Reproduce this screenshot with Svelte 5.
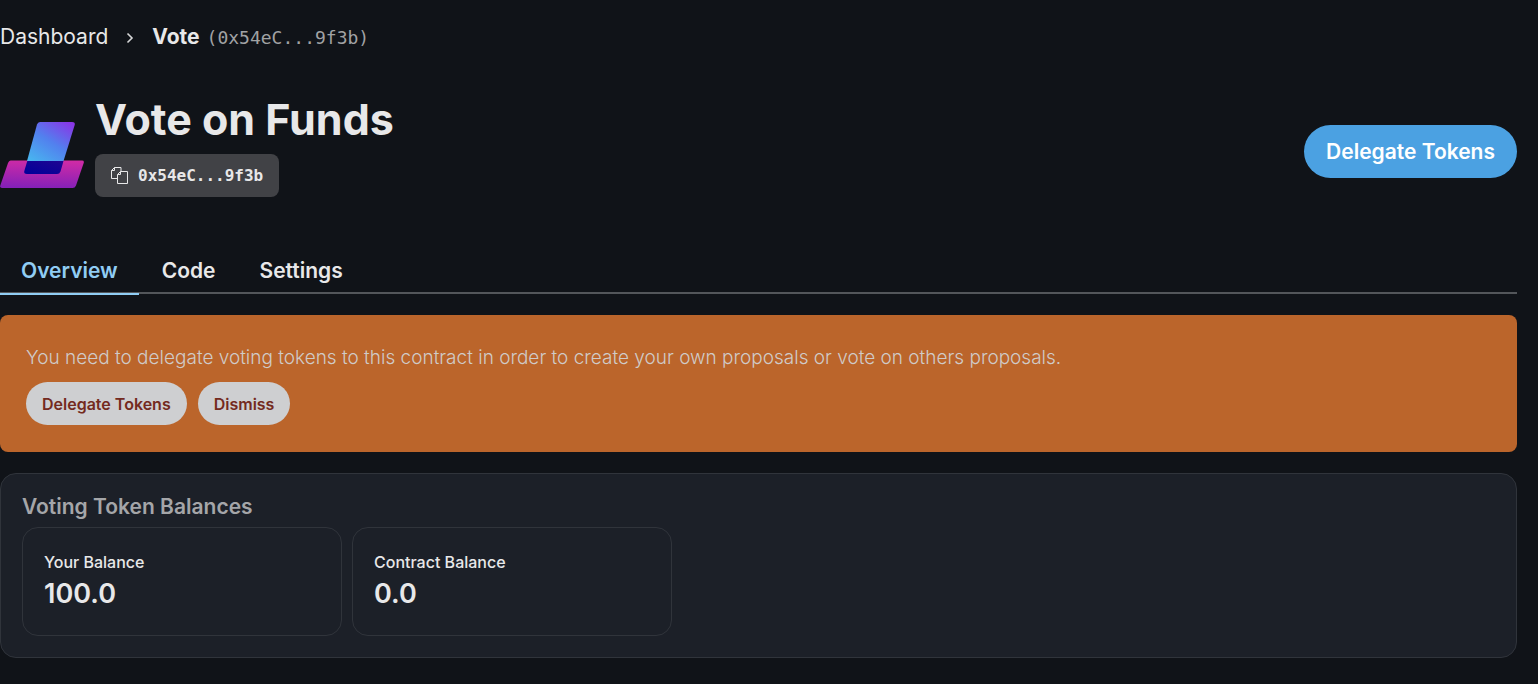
<script>
  const tabs = ['Overview', 'Code', 'Settings'];
  const balances = [
    { label: 'Your Balance', value: '100.0' },
    { label: 'Contract Balance', value: '0.0' }
  ];
  let active = $state('Overview');
</script>

<main>
  <nav class="crumbs" aria-label="Breadcrumb">
    <a href="#dashboard">Dashboard</a>
    <svg class="chevron" width="8" height="12" viewBox="0 0 8 12" fill="none" stroke="#d6d7d8" stroke-width="1.6"><path d="M1.5 1.5 6 6l-4.5 4.5" /></svg>
    <a class="current" href="#vote"><b>Vote</b><span class="address">(0x54eC...9f3b)</span></a>
  </nav>

  <header>
    <svg class="logo" width="84" height="66" viewBox="0 0 84 66" aria-hidden="true">
      <defs>
        <linearGradient id="base" x1="0.45" y1="1" x2="0.55" y2="0"><stop stop-color="#8420b8" /><stop offset="1" stop-color="#cf2ba6" /></linearGradient>
        <linearGradient id="ballot" x1="0.1" y1="1" x2="0.9" y2="0"><stop stop-color="#48b4ef" /><stop offset="0.5" stop-color="#5280ee" /><stop offset="1" stop-color="#8a35e6" /></linearGradient>
        <linearGradient id="slot" x1="0" y1="1" x2="1" y2="0"><stop stop-color="#00009a" /><stop offset="1" stop-color="#1f0591" /></linearGradient>
      </defs>
      <path fill="url(#base)" d="M10.500 38.500H82Q84.500 38.500 83.700 41L76 63.500Q75 66 72.500 66H2Q-0.500 66 0.300 63.500L8 41Q9 38.500 10.500 38.500Z" />
      <path fill="url(#ballot)" d="M40 0H72Q75.500 0 74.700 3L63.500 39H27L37 2.500Q37.800 0 40 0Z" />
      <path fill="url(#slot)" d="M27.300 39H63.500L60.500 49.500Q59.500 52 57 52H27Q23.500 52 24.300 49Z" />
    </svg>
    <div class="identity">
      <h1>Vote on Funds</h1>
      <button class="copy">
        <svg width="17" height="17" viewBox="0 0 17 17" fill="none" stroke="#e8e8e9" stroke-width="1"><path d="M6.500 11.500h-6v-8l3-3h6.500v4M3.500 .5v3h-3M9.500 4.500h7v12h-10v-9ZM9.500 4.500v3h-3" /></svg>
        <span>0x54eC...9f3b</span>
      </button>
    </div>
    <button class="primary">Delegate Tokens</button>
  </header>

  <div class="tabs" role="tablist">
    {#each tabs as tab}
      <button role="tab" aria-selected={active === tab} class:active={active === tab} onclick={() => (active = tab)}>{tab}</button>
    {/each}
  </div>

  <section class="notice">
    <p>You need to delegate voting tokens to this contract in order to create your own proposals or vote on others proposals.</p>
    <div class="actions"><button>Delegate Tokens</button><button>Dismiss</button></div>
  </section>

  <section class="panel">
    <h2>Voting Token Balances</h2>
    <div class="cards">
      {#each balances as balance}
        <article><span>{balance.label}</span><strong>{balance.value}</strong></article>
      {/each}
    </div>
  </section>
</main>

<style>
  :global(body) { margin: 0; background: #101318; }
  main { box-sizing: border-box; padding: 19px 21px 26px 0; color: #e8e8e9; font-family: Inter, sans-serif; }
  button { border: 0; font-family: inherit; cursor: pointer; }
  h1, h2, p { margin: 0; }
  .crumbs { display: flex; align-items: center; height: 34px; font-size: 21px; }
  .crumbs a { color: #e8e8e9; text-decoration: none; }
  .chevron { margin: 4px 18px 0; }
  .current { display: flex; align-items: baseline; gap: 7px; }
  .address { color: #a1a2a4; font: 18px "DejaVu Sans Mono", monospace; }
  header { display: flex; align-items: center; margin-top: 40px; }
  .logo { flex: none; margin-top: 20px; }
  .identity { display: flex; flex-direction: column; align-items: flex-start; gap: 9px; margin-left: 11px; }
  h1 { font-size: 43px; font-weight: 700; line-height: 52px; }
  .copy { display: flex; align-items: center; gap: 10px; height: 43px; padding: 0 16px; border-radius: 8px; background: #414246; color: #e8e8e9; }
  .copy span { font: 700 16px "DejaVu Sans Mono", monospace; }
  .primary { height: 53px; margin: 12px 0 0 auto; padding: 0 22px; border-radius: 27px; background: #4ba1e2; color: #fff; font-size: 21px; font-weight: 600; }
  .tabs { display: flex; gap: 2px; margin-top: 52px; border-bottom: 2px solid #53565a; }
  .tabs button { height: 46px; margin-bottom: -3px; padding: 0 21px 2px; border-bottom: 2px solid transparent; background: none; color: #e8e8e9; font-size: 21px; font-weight: 600; }
  .tabs .active { border-color: #90cdf4; color: #90cdf4; }
  .notice { margin-top: 21px; padding: 29px 26px 27px; border-radius: 8px; background: #bb652b; }
  .notice p { color: #d0cbc8; font-size: 19px; font-weight: 300; line-height: 28px; }
  .actions { display: flex; gap: 11px; margin-top: 10px; }
  .actions button { height: 43px; padding: 0 16px; border-radius: 22px; background: #cecfd1; color: #742a20; font-size: 16px; font-weight: 600; }
  .panel { margin-top: 21px; padding: 21px; border: 1px solid #30343b; border-radius: 16px; background: #1c2028; }
  h2 { color: #a5a6a9; font-size: 21px; font-weight: 600; line-height: 24px; }
  .cards { display: flex; gap: 10px; margin-top: 8px; }
  article { box-sizing: border-box; display: flex; flex-direction: column; width: 320px; height: 109px; padding: 21px; border: 1px solid #30343b; border-radius: 16px; }
  article span { font-size: 16px; font-weight: 500; line-height: 26px; }
  article strong { font-size: 27px; font-weight: 600; line-height: 38px; }
</style>
